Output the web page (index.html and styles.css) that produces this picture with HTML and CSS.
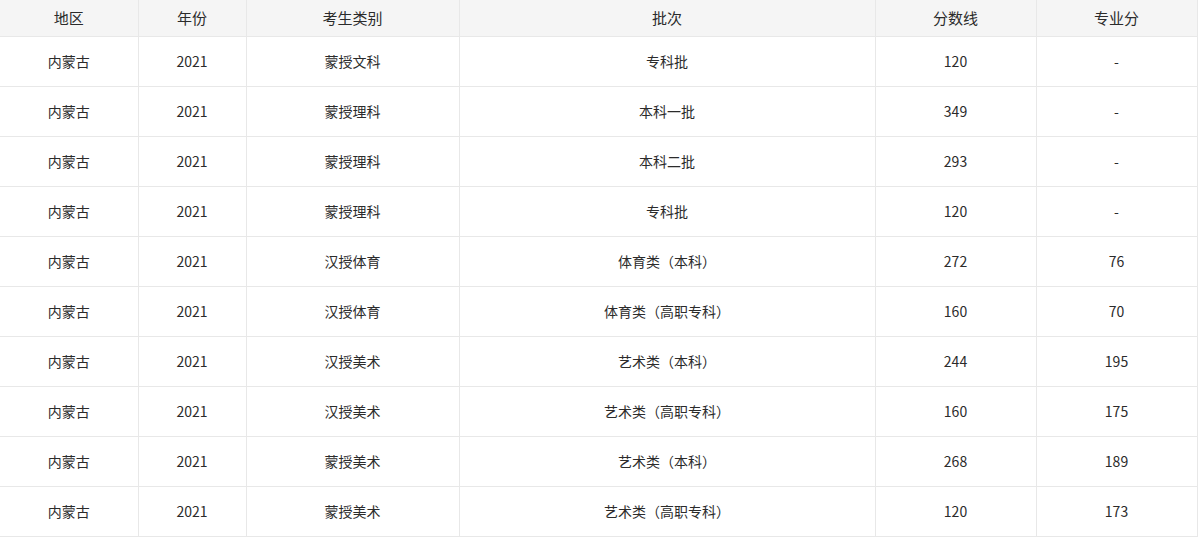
FILE: index.html
```html
<!DOCTYPE html>
<html lang="zh-CN">
<head>
<meta charset="utf-8">
<link rel="stylesheet" href="styles.css">
</head>
<body>
<table class="score-table">
  <colgroup>
    <col class="c1"><col class="c2"><col class="c3"><col class="c4"><col class="c5"><col class="c6">
  </colgroup>
  <thead>
    <tr><th>地区</th><th>年份</th><th>考生类别</th><th>批次</th><th>分数线</th><th>专业分</th></tr>
  </thead>
  <tbody>
    <tr><td>内蒙古</td><td>2021</td><td>蒙授文科</td><td>专科批</td><td>120</td><td>-</td></tr>
    <tr><td>内蒙古</td><td>2021</td><td>蒙授理科</td><td>本科一批</td><td>349</td><td>-</td></tr>
    <tr><td>内蒙古</td><td>2021</td><td>蒙授理科</td><td>本科二批</td><td>293</td><td>-</td></tr>
    <tr><td>内蒙古</td><td>2021</td><td>蒙授理科</td><td>专科批</td><td>120</td><td>-</td></tr>
    <tr><td>内蒙古</td><td>2021</td><td>汉授体育</td><td>体育类（本科）</td><td>272</td><td>76</td></tr>
    <tr><td>内蒙古</td><td>2021</td><td>汉授体育</td><td>体育类（高职专科）</td><td>160</td><td>70</td></tr>
    <tr><td>内蒙古</td><td>2021</td><td>汉授美术</td><td>艺术类（本科）</td><td>244</td><td>195</td></tr>
    <tr><td>内蒙古</td><td>2021</td><td>汉授美术</td><td>艺术类（高职专科）</td><td>160</td><td>175</td></tr>
    <tr><td>内蒙古</td><td>2021</td><td>蒙授美术</td><td>艺术类（本科）</td><td>268</td><td>189</td></tr>
    <tr><td>内蒙古</td><td>2021</td><td>蒙授美术</td><td>艺术类（高职专科）</td><td>120</td><td>173</td></tr>
  </tbody>
</table>
</body>
</html>
```
FILE: styles.css
```css
html, body {
  margin: 0;
  padding: 0;
  background: #fff;
}
body {
  font-family: "Noto Sans CJK SC", "Noto Sans", sans-serif;
  color: #333;
}
.score-table {
  border-collapse: collapse;
  table-layout: fixed;
  width: 1197px;
}
.c1 { width: 138px; }
.c2 { width: 108px; }
.c3 { width: 213px; }
.c4 { width: 416px; }
.c5 { width: 161px; }
.c6 { width: 161px; }
.score-table th,
.score-table td {
  border: 1px solid #e8e8e8;
  text-align: center;
  padding: 0;
  font-weight: normal;
}
.score-table th:first-child,
.score-table td:first-child {
  border-left: none;
}
.score-table thead tr {
  height: 36px;
}
.score-table th {
  background: #f5f5f5;
  font-size: 15px;
  color: #2b2b2b;
  border-top: none;
  height: 35px;
  line-height: 33px;
}
.score-table td {
  height: 49px;
  font-size: 14px;
  color: #2b2b2b;
}
```
